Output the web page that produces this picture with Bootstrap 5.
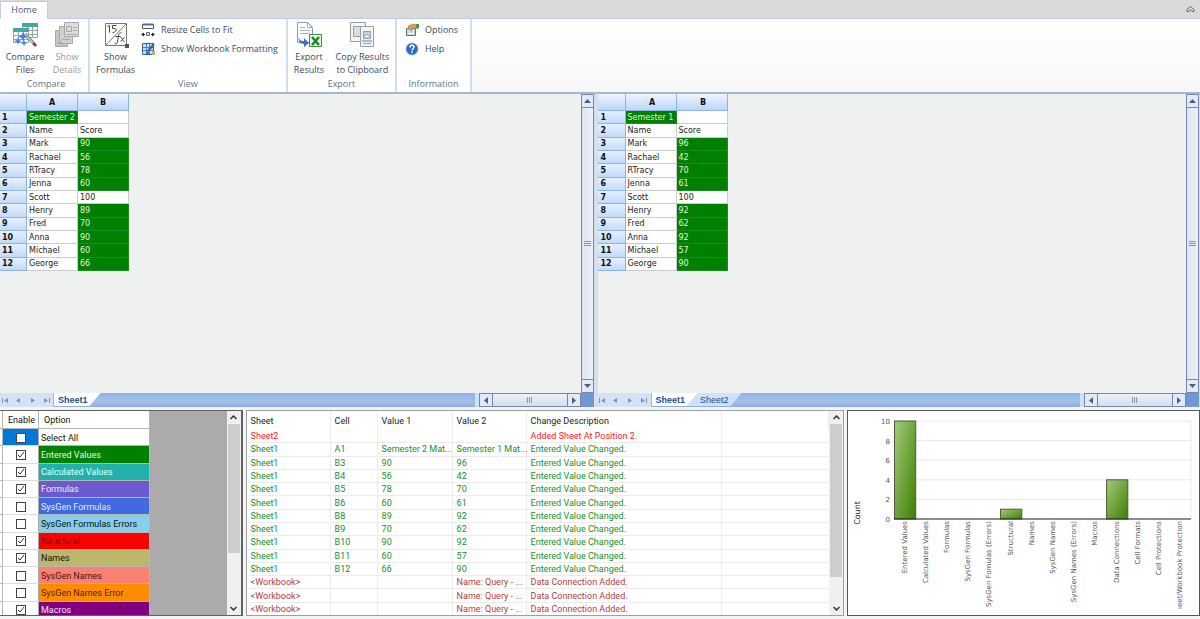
<!DOCTYPE html>
<html lang="en">
<head>
<meta charset="utf-8">
<meta name="viewport" content="width=device-width, initial-scale=1">
<title>Spreadsheet Compare</title>
<link href="https://cdn.jsdelivr.net/npm/bootstrap@5.3.0/dist/css/bootstrap.min.css" rel="stylesheet">
<style>
:root{--ui:"Open Sans","Noto Sans",sans-serif;--cell:"DejaVu Sans",sans-serif;--sys:Roboto,"Liberation Sans",sans-serif}
body{font-family:var(--ui);font-size:9px;line-height:13px;background:#f3f4f4;color:#3b4a66;height:100vh;overflow:hidden}
button{font:inherit;color:inherit;background:none;border:0;padding:0}
table{border-collapse:separate;border-spacing:0}
.tabstrip{height:18px;background:#dadada;padding:1px 5px 0 0}
.home-tab{width:48px;height:18px;background:#fff;border:1px solid #c3cfe0;border-bottom:0;color:#3f5a8a;text-decoration:none;text-align:center;line-height:16px;z-index:1}
.ribbon{height:76px;background:linear-gradient(#fff,#f7f7f7);border-top:1px solid #bccbe0;border-bottom:2px solid #a9b7cb}
.rgroup{border-right:2px solid #d3deec;background:#fff;padding-top:3px}
.rtitle{height:15px;line-height:14px;text-align:center;color:#66748c}
.big{line-height:13px;width:42px;white-space:nowrap}
.big svg{display:block;width:26px;height:26px;margin:0 auto 2px}
.small-cmd{height:19px;gap:6px;white-space:nowrap;line-height:15px}
.small-cmd svg{width:14px;height:14px}
.small-list{margin-top:-2px}
.w-formulas{width:51px}.w-export{width:42px}.w-copy{width:65px}
.off{color:#9a9a9a}
.pane-left{flex:594 1 0}.pane-right{flex:602 1 0;padding-right:1px}
.workspace{gap:4px;background:#d5dfee}
.sheet-area{background:#eff0f0}
.grid{width:129px;height:177px;table-layout:fixed;font:8px/10px var(--cell);color:#222}
.grid th,.grid td{padding:1px 0 0 2px;border-right:1px solid #ccc;border-bottom:1px solid #ccc;overflow:hidden;white-space:nowrap;background:#fff}
.grid th{background:linear-gradient(#e6f0ff,#c3daf9);border-color:#8db2e3;color:#111;font-weight:bold}
.grid thead th{height:17px;text-align:center;padding:1px 0 0;background:linear-gradient(#eef5ff,#bdd6fa)}
.grid td.chg{background:#008000;color:#e4f3dc;border-color:#1c8a1c}
.c-row{width:27px}.c-cell{width:51px}
.pane-right .grid{width:130px}.pane-right .c-row{width:28px}.pane-right .grid th{padding-left:3px}
.vbar{width:13px;background:#e4e9f3;border:1px solid #7787ab}
.hbar{width:102px;background:#e4e9f3;border:1px solid #7787ab}
.vbar button,.hbar button{display:flex;align-items:center;justify-content:center;background:#e3eaf6;flex:none}
.vbar button{height:12px}.hbar button{width:12px}
.thumb{background:linear-gradient(90deg,#dfe5f0,#edf1f8);display:flex;align-items:center;justify-content:center}
.vbar .thumb{border:solid #7787ab;border-width:1px 0}
.hbar .thumb{border:solid #7787ab;border-width:0 1px;background:linear-gradient(#edf1f8,#d5deed)}
.tabbar{height:14px;background:linear-gradient(#8fb2e4,#a4c0ea 60%,#8daedf);font:9px/14px "Liberation Sans",sans-serif}
.navs{width:54px;background:#d4e2f7;border-right:1px solid #9eb7de;justify-content:space-around}
.sheet-tab{height:13px;line-height:14px;color:#204f97;text-decoration:none;padding:0 13px 0 4px;white-space:nowrap;background:#fff;clip-path:polygon(0 0,100% 0,calc(100% - 11px) 100%,0 100%)}
.sheet-tab.active{font-weight:bold}
.sheet-tab.second{background:#d0e1fb;margin-left:-11px;padding-left:13px;clip-path:polygon(11px 0,100% 0,calc(100% - 11px) 100%,0 100%)}
.split{width:4px;background:#cfe0f8}
.corner{width:13px;background:#6f97d3}
.lower{height:206px;margin:3px 0;gap:3px;font:9px/12px var(--sys)}
.opts{flex:242 1 0;background:#ababab;border:solid #606060;border-width:1px 2px 1px 0}
.details{flex:600 1 0;background:#fff;border:1px solid #9b9fa6}
.chart{flex:353 1 0;background:#fff;border:1px solid #555}
.opt-table{width:150px;height:208px;table-layout:fixed;color:#111}
.opt-table th,.opt-table td{padding:1px 2px 0;background:#fff;border-right:1px solid #b5b5b5;border-bottom:1px solid #b5b5b5;font-weight:normal;white-space:nowrap;overflow:hidden}
.opt-table th{height:18px}
.opt-table th:nth-child(2),.opt-table th:nth-child(3){padding-left:5px}
.opt-table td:nth-child(2){text-align:center;border-color:#ddd #aaa #ddd #aaa}
.opt-table tr.sel td:nth-child(2){background:#0078d7}
.opt-table input{appearance:none;display:block;margin:0 auto;width:10px;height:10px;border:1px solid #444;background:#fff}
.opt-table input:checked{background:#fff url("data:image/svg+xml,%3Csvg xmlns='http://www.w3.org/2000/svg' viewBox='0 0 8 8'%3E%3Cpath d='M1 4l2 2 4-5' fill='none' stroke='%23333'/%3E%3C/svg%3E")}
.opt-table label{display:block}
.o-green td:last-child{background:#008000;color:#e9f5e9}
.o-teal td:last-child{background:#20b2aa;color:#e4fffb}
.o-slate td:last-child{background:#6a5acd;color:#efecff}
.o-royal td:last-child{background:#4169e1;color:#e4ecff}
.o-sky td:last-child{background:#87ceeb}
.o-red td:last-child{background:#f00;color:#6b0000}
.o-khaki td:last-child{background:#bdb76b}
.o-salmon td:last-child{background:#fa8072;color:#4a1512}
.o-orange td:last-child{background:#ff8c00;color:#4a2800}
.o-purple td:last-child{background:#800080;color:#f5e2f5}
.wbar{width:14px;flex:none;background:#f0f0f0}
.wbar button{height:13px;display:flex;align-items:center;justify-content:center;color:#333}
.wthumb{background:#cdcdcd;margin:0 1px}
.t-opts{flex:0 0 129px}.t-det{flex:0 0 153px}
.det-table{height:204px;table-layout:fixed;width:100%;line-height:11px}
.det-table th,.det-table td{padding:1px 0 0 4px;border-right:1px solid #ececec;border-bottom:1px solid #ececec;font-weight:normal;white-space:nowrap}
.det-table th{height:19px;color:#222;border-bottom:0}
.det-table td:last-child{border-right:0}
.det-table tr:last-child td{border-bottom:0}
.d-add td{color:#f22}.d-val td{color:#159128}.d-con td{color:#b83c3c}
.chart text{font-family:var(--cell);font-size:7px;fill:#555}
.chart .axis-title{font-size:8px;fill:#222}
</style>
</head>
<body class="d-flex flex-column">
<header>
  <nav class="tabstrip d-flex justify-content-between align-items-start">
    <a class="home-tab" href="#">Home</a>
    <button aria-label="Collapse ribbon" class="mt-1"><svg class="d-block" width="9" height="8" viewBox="0 0 9 8" fill="none" stroke="#666"><path d="M1 4.500 4.500 1.500 8 4.500V6.500H6L4.500 4.500 3 6.500H1Z"/></svg></button>
  </nav>
  <div class="ribbon d-flex">
    <section class="rgroup d-flex flex-column ps-1">
      <div class="d-flex flex-fill align-items-start">
        <button class="big"><svg viewBox="0 0 26 26"><g stroke="#8faaa5" fill="#f8fbfa"><path d="M10.500 1.500h15v14h-15z"/><path d="M10.500 8.500h15M10.500 12.500h15M15.500 5v10M20.500 5v10"/><path d="M1.500 6.500h15v14h-15z"/><path d="M1.500 13.500h15M1.500 17.500h15M6.500 10v10M11.500 10v10"/></g><path fill="#4aa59b" d="M10 1h16v4H10zM1 6h16v4H1z"/><path d="M13 12 24 24" stroke="#655a42" stroke-width="3"/><path d="M13 12l8 9" stroke="#c9c5ae" stroke-width="2"/><path fill="#4a7fdc" d="m11 10 1.500 3 3 1.500-3 1.500L11 19l-1.500-3-3-1.500 3-1.500zM6 15l1 3 3 1-3 1-1 3-1-3-3-1 3-1zM12 18l1 2 2 1-2 1-1 2-1-2-2-1 2-1z"/></svg>Compare<br>Files</button>
        <button class="big off"><svg viewBox="0 0 26 26"><g fill="#dedede" stroke="#a8a8a8"><path fill="#c4c4c4" d="M1.500 8.500h12v16h-12z"/><path d="M5.500 4.500h13v17h-13z" fill="#cfcfcf"/><path d="M10.500.500h14v14h-14z"/><path d="M12.500 4.500h5v5h-5zM19 5.500h4M19 8.500h4M12 12.500h11M8 17.500h8M4 20.500h4"/></g></svg>Show<br>Details</button>
      </div>
      <div class="rtitle">Compare</div>
    </section>
    <section class="rgroup d-flex flex-column">
      <div class="d-flex flex-fill align-items-start pe-2">
        <button class="big w-formulas"><svg viewBox="0 0 26 26"><path d="M2.500 1.500h21v22h-21zM23 2 3 23" fill="#fff" stroke="#777"/><path fill="#555" d="M22 22h4v4h-4z"/><path d="m4.500 4.500 2-1v7M13.500 3.500h-4v3c5-1 5 4 0 4M18.500 11c-3-1-3 2-4 9-.5 2-2 2-3 1M12.500 14.500h5M17.500 15.500c2-1 2 5 4 4M21.500 15.500l-4 4" fill="none" stroke="#444"/></svg>Show<br>Formulas</button>
        <div class="small-list d-flex flex-column align-items-start">
          <button class="small-cmd d-flex align-items-center"><svg viewBox="0 0 14 14"><path d="M1.500 1.500h11v4h-11z" fill="#fff" stroke="#555"/><path d="M2 1.500h10" stroke="#4770a8" stroke-width="2"/><path d="M1 11.500h3M10 11.500h3" stroke="#222"/><path d="M0 11.500l3-2v4zM14 11.500l-3-2v4z" fill="#222"/><path d="M5.500 9.500h3v3h-3z" fill="#ddd" stroke="#666"/></svg>Resize Cells to Fit</button>
          <button class="small-cmd d-flex align-items-center"><svg viewBox="0 0 14 14"><path d="M1.500 1.500h11v11h-11z" fill="#cfe0fb" stroke="#365f9e"/><path d="M2 5.500h10M2 8.500h10M5.500 2v10M8.500 2v10" stroke="#4a7fd0"/><path d="m13 2-6 7" stroke="#345ca9" stroke-width="2"/><path d="m6 9 3 2-4 2z" fill="#2b62c9"/><path d="M11 9h3v4h-3z" fill="#d9a95a"/></svg>Show Workbook Formatting</button>
        </div>
      </div>
      <div class="rtitle">View</div>
    </section>
    <section class="rgroup d-flex flex-column">
      <div class="d-flex flex-fill align-items-start">
        <button class="big w-export"><svg viewBox="0 0 26 26"><path d="M1.500.500h10l5 5v15h-15z" fill="#fdfdfd" stroke="#92979f"/><path d="M11.500.500v5h5M4 8.500h10M4 11.500h10M4 5.500h5" fill="none" stroke="#a9aeb8"/><path d="M13.500 12.500h12v12h-12z" fill="#e9f5e6" stroke="#3d8c42"/><path d="m16 15 7 8M23 15l-7 8" stroke="#19852c" stroke-width="2.500"/><path d="M3 15c0 3 2 4 5 4v-3l5 5-5 4v-3c-4 0-6-3-5-7z" fill="#3b74cf"/></svg>Export<br>Results</button>
        <button class="big w-copy"><svg viewBox="0 0 26 26"><g fill="#f4f4f4" stroke="#9a9da3"><path d="M1.500.500h15v19h-15z"/><path d="M4.500 4.500h8v10h-8z" fill="#ddd"/><path d="M11.500 4.500h13v20h-13z"/><path d="M14.500 9.500h7v7h-7z" fill="#ccd2da"/><path d="m15 15 3-3 3 3M14 21.500h8"/></g><path d="M13 18h10v2H13z" fill="#8fbff5"/></svg>Copy Results<br>to Clipboard</button>
      </div>
      <div class="rtitle">Export</div>
    </section>
    <section class="rgroup d-flex flex-column px-2">
      <div class="flex-fill pe-1">
        <div class="small-list">
        <button class="small-cmd d-flex align-items-center"><svg viewBox="0 0 14 14"><path d="M1.500 5.500h9v7h-9z" fill="#cfd8e6" stroke="#5a6b86"/><path d="M3 10.500h6" stroke="#fff"/><path d="M3 3l5-2 5 1v4L9 4 6 8 4 6z" fill="#d9a052" stroke="#8d6527" stroke-width=".5"/><path d="M11 1h3v4h-3z" fill="#3f9a49"/></svg>Options</button>
        <button class="small-cmd d-flex align-items-center"><svg viewBox="0 0 14 14"><circle cx="7" cy="7" r="6" fill="#2f66c8" stroke="#8aaee8"/><path d="M5 5.500c0-3 4-3 4-.5C9 6.500 7 6.500 7 8.500M7 9.500v1.500" fill="none" stroke="#fff" stroke-width="1.500"/></svg>Help</button>
        </div>
      </div>
      <div class="rtitle">Information</div>
    </section>
  </div>
</header>

<main class="d-flex flex-column flex-fill">
  <div class="workspace d-flex flex-fill">
    <section class="pane-left d-flex flex-column">
      <div class="d-flex flex-fill">
        <div class="sheet-area flex-fill"><table class="grid" id="sheetA"></table></div>
        <div class="vbar d-flex flex-column"><button aria-label="Scroll up"><svg width="7" height="4"><path d="M0 4h7L3.500 0z" fill="#4d5f87"/></svg></button><div class="thumb flex-fill"><svg width="7" height="6" stroke="#8c93a3"><path d="M0 .500h7M0 2.500h7M0 4.500h7"/></svg></div><button aria-label="Scroll down"><svg width="7" height="4"><path d="M0 0h7L3.500 4z" fill="#4d5f87"/></svg></button></div>
      </div>
      <div class="tabbar d-flex">
        <div class="navs d-flex align-items-center"><svg width="50" height="7" fill="#8b93a5"><path d="M0 1h1v5H0zM6 1v5L2 3.500zM18 1v5l-4-2.500zM29 1v5l4-2.500zM42 1v5l4-2.500zM47 1h1v5h-1z"/></svg></div>
        <a class="sheet-tab active" href="#">Sheet1</a>
        <div class="flex-fill"></div><div class="split"></div>
        <div class="hbar d-flex"><button aria-label="Scroll left"><svg width="4" height="7"><path d="M4 0v7L0 3.500z" fill="#4d5f87"/></svg></button><div class="thumb flex-fill"><svg width="6" height="6" stroke="#8c93a3"><path d="M.500 0v6M2.500 0v6M4.500 0v6"/></svg></div><button aria-label="Scroll right"><svg width="4" height="7"><path d="M0 0v7l4-3.500z" fill="#4d5f87"/></svg></button></div>
        <div class="corner"></div>
      </div>
    </section>
    <section class="pane-right d-flex flex-column">
      <div class="d-flex flex-fill">
        <div class="sheet-area flex-fill"><table class="grid" id="sheetB"></table></div>
        <div class="vbar d-flex flex-column"><button aria-label="Scroll up"><svg width="7" height="4"><path d="M0 4h7L3.500 0z" fill="#4d5f87"/></svg></button><div class="thumb flex-fill"><svg width="7" height="6" stroke="#8c93a3"><path d="M0 .500h7M0 2.500h7M0 4.500h7"/></svg></div><button aria-label="Scroll down"><svg width="7" height="4"><path d="M0 0h7L3.500 4z" fill="#4d5f87"/></svg></button></div>
      </div>
      <div class="tabbar d-flex">
        <div class="navs d-flex align-items-center"><svg width="50" height="7" fill="#8b93a5"><path d="M0 1h1v5H0zM6 1v5L2 3.500zM18 1v5l-4-2.500zM29 1v5l4-2.500zM42 1v5l4-2.500zM47 1h1v5h-1z"/></svg></div>
        <a class="sheet-tab active" href="#">Sheet1</a><a class="sheet-tab second" href="#">Sheet2</a>
        <div class="flex-fill"></div><div class="split"></div>
        <div class="hbar d-flex"><button aria-label="Scroll left"><svg width="4" height="7"><path d="M4 0v7L0 3.500z" fill="#4d5f87"/></svg></button><div class="thumb flex-fill"><svg width="6" height="6" stroke="#8c93a3"><path d="M.500 0v6M2.500 0v6M4.500 0v6"/></svg></div><button aria-label="Scroll right"><svg width="4" height="7"><path d="M0 0v7l4-3.500z" fill="#4d5f87"/></svg></button></div>
        <div class="corner"></div>
      </div>
    </section>
  </div>

  <div class="lower d-flex">
    <section class="opts d-flex justify-content-between overflow-hidden">
      <table class="opt-table">
        <colgroup><col style="width:3px"><col style="width:36px"><col></colgroup>
        <thead><tr><th class="p-0"></th><th>Enable</th><th>Option</th></tr></thead>
        <tbody id="options"></tbody>
      </table>
      <div class="wbar d-flex flex-column"><button aria-label="Scroll up"><svg width="7" height="5" fill="none" stroke="currentColor" stroke-width="1.500"><path d="M.500 4 3.500 1l3 3"/></svg></button><div class="wthumb t-opts"></div><div class="flex-fill"></div><button aria-label="Scroll down"><svg width="7" height="5" fill="none" stroke="currentColor" stroke-width="1.500"><path d="m.500 1 3 3 3-3"/></svg></button></div>
    </section>
    <section class="details d-flex overflow-hidden">
      <div class="flex-fill">
      <table class="det-table">
        <colgroup><col style="width:84px"><col style="width:47px"><col style="width:75px"><col style="width:74px"><col style="width:195px"><col></colgroup>
        <thead><tr><th>Sheet</th><th>Cell</th><th>Value 1</th><th>Value 2</th><th>Change Description</th><th></th></tr></thead>
        <tbody id="changes"></tbody>
      </table>
      </div>
      <div class="wbar d-flex flex-column"><button aria-label="Scroll up"><svg width="7" height="5" fill="none" stroke="currentColor" stroke-width="1.500"><path d="M.500 4 3.500 1l3 3"/></svg></button><div class="wthumb t-det"></div><div class="flex-fill"></div><button aria-label="Scroll down"><svg width="7" height="5" fill="none" stroke="currentColor" stroke-width="1.500"><path d="m.500 1 3 3 3-3"/></svg></button></div>
    </section>
    <section class="chart">
      <svg class="d-block w-100 h-100" viewBox="0 0 351 204" id="chart" role="img" aria-label="Change count by type">
        <defs><linearGradient id="bar" x1="0" y1="0" x2="1" y2="1"><stop offset="0" stop-color="#a3cb78"/><stop offset="1" stop-color="#3f7d05"/></linearGradient></defs>
      </svg>
    </section>
  </div>
</main>

<script src="https://cdn.jsdelivr.net/npm/bootstrap@5.3.0/dist/js/bootstrap.bundle.min.js"></script>
<script>
const names = ['Mark','Rachael','RTracy','Jenna','Scott','Henry','Fred','Anna','Michael','George'];
function sheet(id, title, scores) {
  let h = '<colgroup><col class="c-row"><col class="c-cell"><col class="c-cell"></colgroup><thead><tr><th></th><th>A</th><th>B</th></tr></thead><tbody>';
  h += `<tr><th>1</th><td class="chg">${title}</td><td></td></tr><tr><th>2</th><td>Name</td><td>Score</td></tr>`;
  names.forEach((n, i) => h += `<tr><th>${i + 3}</th><td>${n}</td><td class="${scores[i] === 100 ? '' : 'chg'}">${scores[i]}</td></tr>`);
  document.getElementById(id).innerHTML = h + '</tbody>';
}
const after = [90,56,78,60,100,89,70,90,60,66], before = [96,42,70,61,100,92,62,92,57,90];
sheet('sheetA', 'Semester 2', after);
sheet('sheetB', 'Semester 1', before);

document.getElementById('options').innerHTML = [
  ['Select All',0,'sel'],['Entered Values',1,'o-green'],['Calculated Values',1,'o-teal'],['Formulas',1,'o-slate'],
  ['SysGen Formulas',0,'o-royal'],['SysGen Formulas Errors',0,'o-sky'],['Structural',1,'o-red'],['Names',1,'o-khaki'],
  ['SysGen Names',0,'o-salmon'],['SysGen Names Error',0,'o-orange'],['Macros',1,'o-purple']
].map(([t, on, c], i) => `<tr class="${c}"><td class="p-0"></td><td><input type="checkbox" id="o${i}" ${on ? 'checked' : ''}></td><td><label for="o${i}">${t}</label></td></tr>`).join('');

const rows = [['d-add','Sheet2','','','','Added Sheet At Position 2.'],
  ['d-val','Sheet1','A1','Semester 2 Mat...','Semester 1 Mat...','Entered Value Changed.']];
after.forEach((v, i) => { if (v !== before[i]) rows.push(['d-val','Sheet1','B' + (i + 3), v, before[i], 'Entered Value Changed.']); });
for (let i = 0; i < 3; i++) rows.push(['d-con','&lt;Workbook&gt;','','','Name: Query - ...','Data Connection Added.']);
document.getElementById('changes').innerHTML = rows.map(([c, ...t]) => `<tr class="${c}">${t.map(x => `<td>${x}</td>`).join('')}<td></td></tr>`).join('');

const counts = [['Entered Values',10],['Calculated Values',0],['Formulas',0],['SysGen Formulas',0],['SysGen Fomulas (Errors)',0],['Structural',1],['Names',0],['SysGen Names',0],['SysGen Names (Errors)',0],['Macros',0],['Data Connections',4],['Cell Formats',0],['Cell Protections',0],['ıeet/Workbook Protection',0]];
const x0 = 46, y0 = 108, w = 297, h = 98, step = w / counts.length;
let g = '';
for (let v = 0; v <= 10; v += 2) {
  const y = y0 - h * v / 10;
  g += `<path d="M${x0} ${y}H${x0 + w}" stroke="#e9e9e9"/><text x="42" y="${y + 3}" text-anchor="end">${v}</text>`;
}
g += `<path d="M${x0 + w} ${y0 - h}V${y0}" stroke="#e9e9e9"/>`;
counts.forEach(([t, v], i) => {
  const x = x0 + i * step;
  if (v) g += `<rect x="${x + .5}" y="${y0 - h * v / 10}" width="${step}" height="${h * v / 10}" fill="url(#bar)" stroke="#4d5a3a"/>`;
  g += `<text transform="translate(${x + step / 2 + 2} ${y0 + 2}) rotate(-90)" text-anchor="end">${t}</text>`;
});
g += `<path d="M${x0} ${y0}H${x0 + w}" stroke="#222"/><text class="axis-title" transform="translate(12 102) rotate(-90)" text-anchor="middle">Count</text>`;
document.getElementById('chart').innerHTML += g;
</script>
</body>
</html>
